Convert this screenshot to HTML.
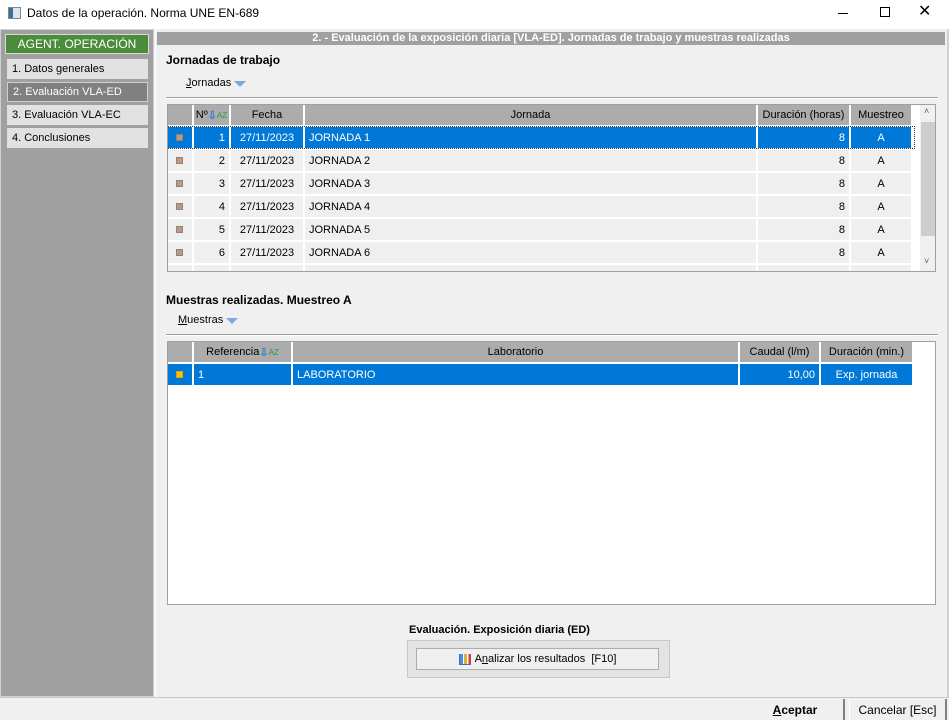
<!DOCTYPE html>
<html><head><meta charset="utf-8"><style>
*{box-sizing:border-box;margin:0;padding:0}
body{width:949px;height:720px;background:#f0f0f0;font-family:"Liberation Sans",sans-serif;font-size:11px;color:#000;position:relative;overflow:hidden}
.a{position:absolute}
.title{left:0;top:0;width:949px;height:29px;background:#fff}
.cell{position:absolute;height:100%;border-right:2px solid #fff;display:flex;align-items:center;white-space:nowrap;overflow:hidden}
.hdr{background:#acacac;justify-content:center}
.row .cell{background:#efefef}
.sel .cell{background:#0078d7;color:#fff}
.sq{width:7px;height:7px;background:#b49a88;border:1px solid #9a8070;margin-left:8px}
.r{justify-content:flex-end;padding-right:4px}
.c{justify-content:center}
.l{padding-left:4px}
.nav{left:7px;width:141px;height:20px;background:#e1e1e1;padding-left:5px;display:flex;align-items:center}
</style></head><body>
<div class="a title"></div>
<div class="a" style="left:8px;top:7px;width:13px;height:12px;border:1px solid #7a8a99;background:#dde6ee"><div style="width:4px;height:10px;background:#3f6f94"></div></div>
<div class="a" style="left:27px;top:6px;font-size:12px">Datos de la operación. Norma UNE EN-689</div>
<div class="a" style="left:838px;top:13px;width:10px;height:1px;background:#000"></div>
<div class="a" style="left:880px;top:7px;width:10px;height:10px;border:1px solid #000"></div>
<div class="a" style="left:918px;top:1px;font-size:16px">✕</div>

<div class="a" style="left:0;top:29px;width:154px;height:668px;background:#a0a0a0;border:1px solid #d0d0d0"></div>
<div class="a" style="left:5px;top:34px;width:144px;height:20px;background:#4a8c3a;border:1px solid #d9d9d9;color:#fff;font-size:12px;display:flex;align-items:center;justify-content:center">AGENT. OPERACIÓN</div>
<div class="a nav" style="top:59px">1. Datos generales</div>
<div class="a nav" style="top:82px;background:#808080;color:#fff;border:1px solid #d0d0d0">2. Evaluación VLA-ED</div>
<div class="a nav" style="top:105px">3. Evaluación VLA-EC</div>
<div class="a nav" style="top:128px">4. Conclusiones</div>

<div class="a" style="left:155px;top:29px;width:794px;height:668px;border-left:1px solid #fff;border-right:2px solid #d0d0d0"></div>
<div class="a" style="left:157px;top:32px;width:788px;height:13px;background:#a0a0a0;color:#fff;font-weight:bold;font-size:11px;line-height:13px;text-align:center;white-space:nowrap">2. - Evaluación de la exposición diaria [VLA-ED]. Jornadas de trabajo y muestras realizadas</div>

<div class="a" style="left:166px;top:53px;font-weight:bold;font-size:12px">Jornadas de trabajo</div>
<div class="a" style="left:186px;top:77px"><u>J</u>ornadas</div>
<div class="a" style="left:234px;top:81px;width:0;height:0;border-left:6px solid transparent;border-right:6px solid transparent;border-top:6px solid #7fa6e0"></div>
<div class="a" style="left:166px;top:97px;width:772px;height:2px;background:#a0a0a0;border-bottom:1px solid #fff"></div>

<div class="a" style="left:167px;top:104px;width:769px;height:168px;background:#fff;border:1px solid #a0a0a0;overflow:hidden">
 <div class="a" style="left:752px;top:0;width:16px;height:166px;background:#f0f0f0"><div style="position:absolute;left:1px;top:17px;width:14px;height:114px;background:#cdcdcd"></div><div style="position:absolute;left:4px;top:1px;font-size:9px;color:#606060">˄</div><div style="position:absolute;left:4px;top:151px;font-size:9px;color:#606060">˅</div></div>
 <div class="a" style="left:0;top:0;width:746px;height:20px">
  <div class="cell hdr" style="left:0;width:26px"></div>
  <div class="cell hdr" style="left:26px;width:37px">Nº <span style="color:#3a7fd8;font-weight:bold">⇩</span><span style="color:#2a9a3a;font-size:8px">AZ</span></div>
  <div class="cell hdr" style="left:63px;width:74px">Fecha</div>
  <div class="cell hdr" style="left:137px;width:453px">Jornada</div>
  <div class="cell hdr" style="left:590px;width:93px">Duración (horas)</div>
  <div class="cell hdr" style="left:683px;width:62px">Muestreo</div>
 </div>
 <div id="rows"></div>
</div>

<div class="a" style="left:166px;top:293px;font-weight:bold;font-size:12px">Muestras realizadas. Muestreo A</div>
<div class="a" style="left:178px;top:314px"><u>M</u>uestras</div>
<div class="a" style="left:226px;top:318px;width:0;height:0;border-left:6px solid transparent;border-right:6px solid transparent;border-top:6px solid #7fa6e0"></div>
<div class="a" style="left:166px;top:334px;width:772px;height:2px;background:#a0a0a0;border-bottom:1px solid #fff"></div>

<div class="a" style="left:167px;top:341px;width:769px;height:264px;background:#fff;border:1px solid #a0a0a0;overflow:hidden">
 <div class="a" style="left:0;top:0;width:746px;height:20px">
  <div class="cell hdr" style="left:0;width:26px"></div>
  <div class="cell hdr" style="left:26px;width:99px">Referencia <span style="color:#3a7fd8;font-weight:bold">⇩</span><span style="color:#2a9a3a;font-size:8px">AZ</span></div>
  <div class="cell hdr" style="left:125px;width:447px">Laboratorio</div>
  <div class="cell hdr" style="left:572px;width:81px">Caudal (l/m)</div>
  <div class="cell hdr" style="left:653px;width:93px">Duración (min.)</div>
 </div>
 <div class="a sel" style="left:0;top:22px;width:746px;height:21px">
  <div class="cell" style="left:0;width:26px"><div class="sq" style="background:#ffc000;border-color:#e0a000"></div></div>
  <div class="cell l" style="left:26px;width:99px">1</div>
  <div class="cell l" style="left:125px;width:447px">LABORATORIO</div>
  <div class="cell r" style="left:572px;width:81px">10,00</div>
  <div class="cell c" style="left:653px;width:93px">Exp. jornada</div>
 </div>
</div>

<div class="a" style="left:409px;top:624px;font-weight:bold;font-size:11px">Evaluación. Exposición diaria (ED)</div>
<div class="a" style="left:407px;top:640px;width:263px;height:38px;background:#e3e3e3;border:1px solid #c8c8c8"></div>
<div class="a" style="left:416px;top:648px;width:243px;height:22px;background:#f0f0f0;border:1px solid #adadad;display:flex;align-items:center;justify-content:center"><span style="display:inline-block;width:12px;height:11px;margin-right:4px;background:linear-gradient(90deg,#4a90e2 0 25%,#fff 25% 37%,#e0b030 37% 62%,#fff 62% 75%,#d04040 75%);border-left:1px solid #4070b0;border-bottom:1px solid #4070b0"></span>A<u>n</u>alizar los resultados &nbsp;[F10]</div>

<div class="a" style="left:0;top:697px;width:949px;height:1px;background:#c8c8c8"></div>
<div class="a" style="left:747px;top:699px;width:98px;height:21px;background:#f0f0f0;border-right:2px solid #808080;display:flex;align-items:center;justify-content:center;font-weight:bold;font-size:12px"><u>A</u>ceptar</div>
<div class="a" style="left:849px;top:699px;width:98px;height:21px;background:#f0f0f0;border-right:2px solid #808080;border-left:1px solid #fff;display:flex;align-items:center;justify-content:center;font-size:12px">Cancelar [Esc]</div>

<script>
var h='';for(var i=1;i<=7;i++){var t=20+(i-1)*23+2;h+='<div class="a row'+(i==1?' sel':'')+'" style="left:0;top:'+t+'px;width:746px;height:21px'+(i==1?';outline:1px dotted #333':'')+'"><div class="cell" style="left:0;width:26px"><div class="sq"></div></div><div class="cell r" style="left:26px;width:37px">'+i+'</div><div class="cell c" style="left:63px;width:74px">27/11/2023</div><div class="cell l" style="left:137px;width:453px">JORNADA '+i+'</div><div class="cell r" style="left:590px;width:93px">8</div><div class="cell c" style="left:683px;width:62px">A</div></div>';}
document.getElementById('rows').innerHTML=h;
</script>
</body></html>
